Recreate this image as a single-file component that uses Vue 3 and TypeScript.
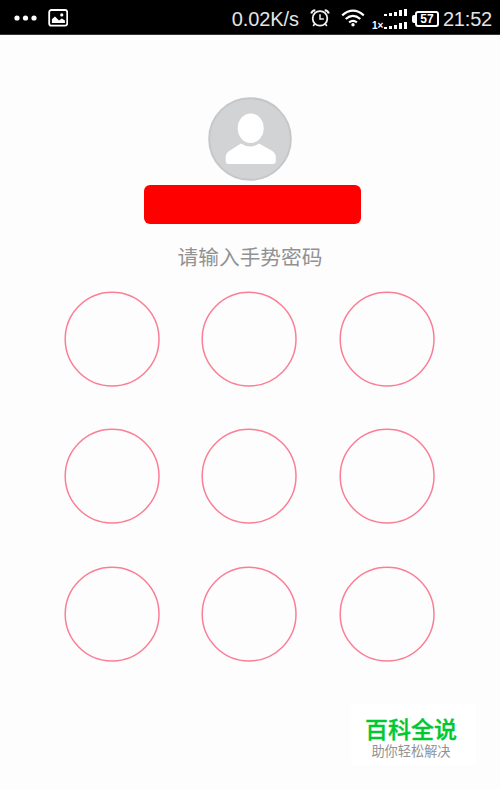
<script setup lang="ts">
const dots: number[] = [1, 2, 3, 4, 5, 6, 7, 8, 9]
const bars: number[] = [2, 3, 4, 6, 7]
</script>

<template>
  <main class="screen">
    <header class="status">
      <svg class="more" width="24" height="8" viewBox="0 0 24 8" fill="#fff">
        <circle cx="3" cy="4" r="2.6" /><circle cx="11.5" cy="4" r="2.6" /><circle cx="20" cy="4" r="2.6" />
      </svg>
      <svg class="picture" width="20" height="18" viewBox="0 0 20 18">
        <rect x="1.2" y="1" width="18" height="15.6" rx="2.2" fill="none" stroke="#fff" stroke-width="1.8" />
        <path d="M3.9 14V10.3L7 7.6 11 11.5 13.8 9.6 16.9 11.4V14Z" fill="#fff" />
        <circle cx="13.8" cy="5.9" r="1.6" fill="#fff" />
      </svg>
      <span class="speed">0.02K/s</span>
      <svg class="alarm" width="20" height="18" viewBox="0 0 20 18" fill="none" stroke="#f2f2f2">
        <circle cx="10" cy="9.4" r="7.3" stroke-width="1.8" />
        <path d="M10 5.2V10H13.8" stroke-width="1.5" />
        <path d="M1.2 4.5Q1.9 1.4 5.3 1.2M18.8 4.5Q18.1 1.4 14.7 1.2" stroke-width="2" />
        <path d="M4.6 15 3.2 17M15.4 15 16.8 17" stroke-width="1.7" />
      </svg>
      <svg class="wifi" width="24" height="18" viewBox="0 0 24 18" fill="none" stroke="#fff" stroke-width="2.2">
        <path d="M1.2 6.3Q12-3 22.8 6.3M4.7 10Q12 3.7 19.3 10M8.1 13.4Q12 10.2 15.9 13.4" />
        <circle cx="12" cy="15.8" r="1.7" fill="#fff" stroke="none" />
      </svg>
      <div class="signals">
        <span class="network">1×</span>
        <div class="rows">
          <div v-for="row in 2" :key="row" class="bars">
            <i v-for="(height, index) in bars" :key="index" class="bar" :style="{ height: height + 'px' }"></i>
          </div>
        </div>
      </div>
      <div class="battery"><i class="cap"></i><span class="level">57</span></div>
      <time class="clock">21:52</time>
    </header>
    <svg class="avatar" width="84" height="84" viewBox="0 0 84 84">
      <circle cx="42" cy="42" r="40.8" fill="#d1d3d5" stroke="#c5c7c9" stroke-width="2" />
      <path d="M33 46.5Q42 52.5 51 46.5L63.5 53.5Q67.8 56 67.8 60V64Q67.8 67 64.8 67H20.7Q17.7 67 17.7 64V60Q17.7 56 22 53.5Z" fill="#fff" />
      <ellipse cx="42.7" cy="31.9" rx="14" ry="15.9" fill="#d1d3d5" />
      <ellipse cx="42.7" cy="31.2" rx="13" ry="14.8" fill="#fff" />
    </svg>
    <div class="account"></div>
    <p class="prompt">请输入手势密码</p>
    <section class="pattern">
      <svg v-for="dot in dots" :key="dot" width="96" height="96" viewBox="0 0 96 96">
        <circle cx="48.1" cy="48.1" r="46.9" fill="none" stroke="#fb7e96" stroke-width="1.5" />
      </svg>
    </section>
    <footer class="brand">
      <strong class="name">百科全说</strong>
      <span class="slogan">助你轻松解决</span>
    </footer>
  </main>
</template>

<style>
body { margin: 0; background: #fdfdfd; }
</style>

<style scoped>
.screen { width: 500px; height: 790px; overflow: hidden; display: flex; flex-direction: column; align-items: center; background: #fdfdfd; font-family: "Liberation Sans", "Noto Sans CJK SC", sans-serif; }
.status { box-sizing: border-box; width: 500px; height: 35px; flex: none; display: flex; align-items: center; padding: 2px 8px 0 14px; background: #000; border-bottom: 1px solid #373334; color: #e4e4e4; }
.picture { margin-left: 10px; }
.speed { margin-left: auto; font-size: 20px; line-height: 32px; letter-spacing: -.1px; padding-top: 2px; }
.alarm { margin-left: 11px; }
.wifi { margin-left: 11px; }
.signals { display: flex; align-items: flex-end; margin-left: 7px; height: 22px; }
.network { font: bold 10px/9px "Liberation Sans", sans-serif; width: 12px; margin-bottom: -1px; color: #fff; }
.rows { display: flex; flex-direction: column; gap: 5px; }
.bars { display: flex; align-items: flex-end; gap: 2px; height: 8px; }
.bar { width: 3px; background: #fff; }
.battery { display: flex; align-items: center; margin: 1px 0 0 5px; }
.cap { width: 3px; height: 8px; background: #fff; border-radius: 2px 0 0 2px; }
.level { box-sizing: border-box; width: 24px; height: 16px; border: 2px solid #fff; border-radius: 3px; color: #fff; text-align: center; font: bold 12px/12px "Liberation Sans", sans-serif; }
.clock { margin-left: 4px; font-size: 20px; line-height: 32px; letter-spacing: -.2px; padding-top: 2px; }
.avatar { margin-top: 62px; flex: none; }
.account { width: 217px; height: 38.5px; flex: none; margin: 4.3px 0 0 4px; border-radius: 6px; background: #f00; }
.prompt { margin: 19.2px 0 0; height: 30px; font-size: 20.7px; line-height: 30px; color: #929292; white-space: nowrap; }
.pattern { display: grid; grid-template-columns: repeat(3, 96px); gap: 41.3px; margin-top: 18.05px; margin-right: 1.4px; }
.pattern svg { display: block; }
.brand { align-self: flex-end; box-sizing: border-box; width: 125px; height: 61px; margin: 42px 24px 0 0; padding: 8px 5px 0 0; display: flex; flex-direction: column; align-items: center; background: #fff; }
.name { font-family: "Noto Sans CJK SC", sans-serif; font-size: 23px; line-height: 32px; font-weight: 500; color: #00c830; -webkit-text-stroke: .35px #00c830; }
.slogan { font-size: 13.2px; line-height: 15px; color: #929292; }
</style>
